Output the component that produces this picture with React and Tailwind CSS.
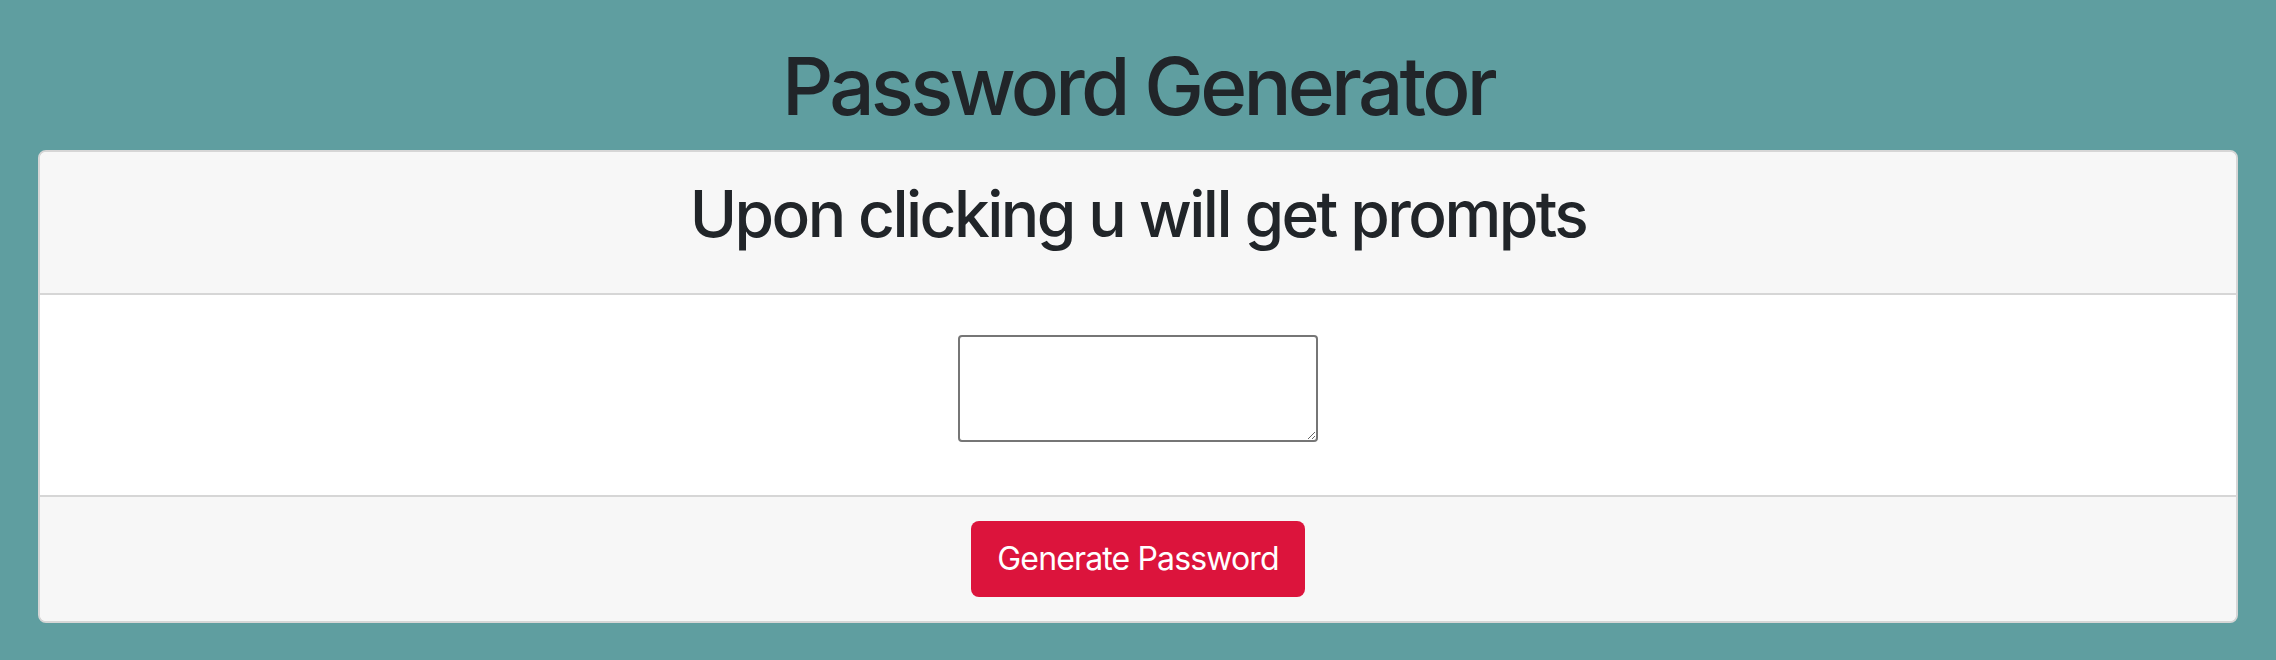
// App.jsx

export default function App() {
  return (
    <div
      className="min-h-screen bg-[#5f9ea0] pt-[38px] text-[#212529]"
      style={{ fontFamily: 'Inter, "Noto Sans", sans-serif' }}
    >
      {/* Page title */}
      <h1 className="text-center text-[80px] leading-[1.2] font-medium tracking-[-0.047em] mb-[16px]">
        Password Generator
      </h1>

      {/* Card */}
      <div className="mx-[38px] border-2 border-[#d6d6d6] rounded-[8px] bg-white overflow-hidden">
        {/* Header */}
        <div className="bg-[#f7f7f7] px-[40px] pt-[24px] pb-[24px] border-b-2 border-[#d6d6d6]">
          <h2 className="text-center text-[64px] leading-[1.2] font-medium tracking-[-0.04em] mb-[16px]">
            Upon clicking u will get prompts
          </h2>
        </div>

        {/* Body */}
        <div className="px-[40px] pt-[40px] pb-[53px] flex justify-center">
          <textarea
            className="block w-[360px] h-[107px] border-2 border-[#767676] rounded-[4px] bg-white"
          />
        </div>

        {/* Footer */}
        <div className="bg-[#f7f7f7] px-[40px] py-[24px] border-t-2 border-[#d6d6d6] flex justify-center">
          <button
            type="button"
            className="h-[76px] px-[26px] bg-[#dc143c] text-white text-[32px] leading-[1.5] tracking-[-0.027em] rounded-[8px]"
          >
            Generate Password
          </button>
        </div>
      </div>
    </div>
  );
}
